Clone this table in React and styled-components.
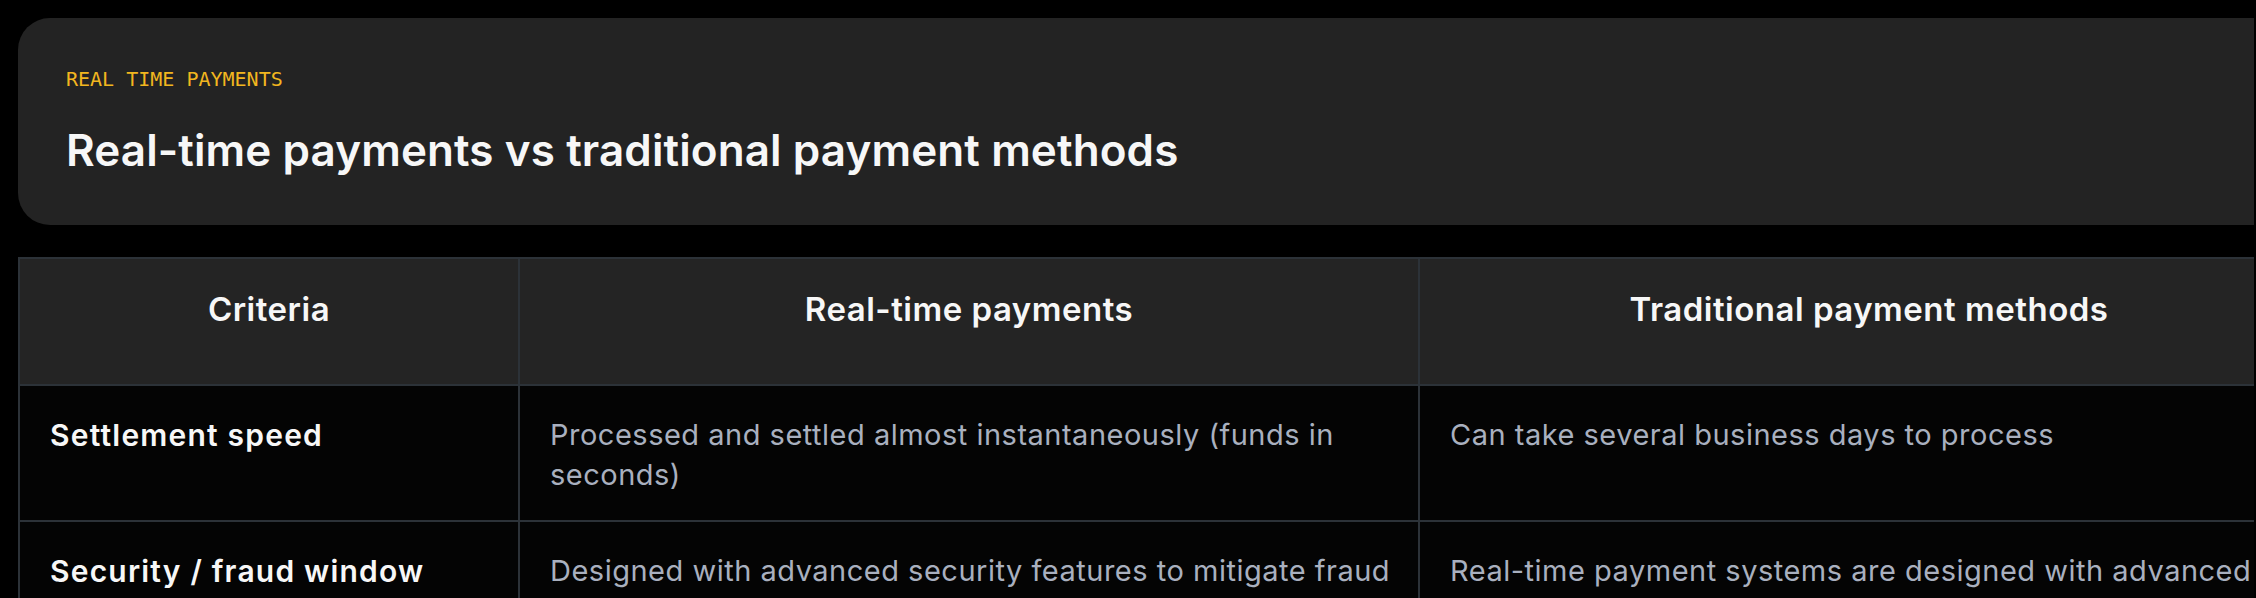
import React from "react";
import styled, { createGlobalStyle } from "styled-components";

const GlobalStyle = createGlobalStyle`
  html, body {
    margin: 0;
    padding: 0;
    background: #000;
  }
  body {
    font-family: Inter, "Noto Sans", sans-serif;
    -webkit-font-smoothing: antialiased;
  }
`;

const rows = [
  {
    label: "Settlement speed",
    rtp: "Processed and settled almost instantaneously (funds in seconds)",
    trad: "Can take several business days to process",
  },
  {
    label: "Security / fraud window",
    rtp: "Designed with advanced security features to mitigate fraud risk, with real-time monitoring of each transaction",
    trad: "Real-time payment systems are designed with advanced security, while traditional methods leave a longer window for fraud",
  },
];

export default function App() {
  return (
    <>
      <GlobalStyle />
      <Page>
        <Viewport>
          <Hero>
            <Eyebrow>REAL TIME PAYMENTS</Eyebrow>
            <Title>Real-time payments vs traditional payment methods</Title>
          </Hero>
          <Table>
            <colgroup>
              <col style={{ width: 500 }} />
              <col style={{ width: 900 }} />
              <col style={{ width: 900 }} />
            </colgroup>
            <thead>
              <tr>
                <HeadCell>Criteria</HeadCell>
                <HeadCell>Real-time payments</HeadCell>
                <HeadCell>Traditional payment methods</HeadCell>
              </tr>
            </thead>
            <tbody>
              {rows.map((r) => (
                <tr key={r.label}>
                  <LabelCell>{r.label}</LabelCell>
                  <Cell>{r.rtp}</Cell>
                  <Cell>{r.trad}</Cell>
                </tr>
              ))}
            </tbody>
          </Table>
        </Viewport>
      </Page>
    </>
  );
}

const Page = styled.div`
  padding: 18px 0 0 18px;
  height: 598px;
  box-sizing: border-box;
  overflow: hidden;
`;

const Viewport = styled.div`
  width: 2236px;
  overflow: hidden;
  display: flex;
  flex-direction: column;
  gap: 32px;
`;

const Hero = styled.div`
  flex: none;
  width: 2300px;
  box-sizing: border-box;
  background: #232323;
  border-radius: 32px;
  padding: 49px 48px 48px;
  display: flex;
  flex-direction: column;
  gap: 33px;
`;

const Eyebrow = styled.div`
  font-family: "DejaVu Sans Mono", "Liberation Mono", monospace;
  font-size: 20px;
  line-height: 24px;
  color: #f2b61f;
`;

const Title = styled.h1`
  margin: 0;
  font-family: Inter, sans-serif;
  font-weight: 600;
  font-size: 44px;
  line-height: 1.2;
  color: #f7f7f7;
  letter-spacing: 0.1px;
`;

const Table = styled.table`
  flex: none;
  width: 2300px;
  table-layout: fixed;
  border-collapse: collapse;
  border: 2px solid #2c3238;
`;

const HeadCell = styled.th`
  background: #242424;
  border: 2px solid #2c3238;
  padding: 26px 30px 51px;
  font-family: Inter, sans-serif;
  font-weight: 600;
  font-size: 33px;
  line-height: 48px;
  letter-spacing: 0.5px;
  color: #f7f7f7;
  text-align: center;
  vertical-align: top;
`;

const Cell = styled.td`
  background: #040404;
  border: 2px solid #2c3238;
  padding: 29px 22px 25px 30px;
  font-family: Inter, sans-serif;
  font-weight: 400;
  font-size: 29px;
  line-height: 40px;
  letter-spacing: 0.5px;
  color: #a9b0bf;
  text-align: left;
  vertical-align: top;
`;

const LabelCell = styled(Cell)`
  font-weight: 600;
  font-size: 30px;
  letter-spacing: 1.2px;
  color: #f7f7f7;
`;
